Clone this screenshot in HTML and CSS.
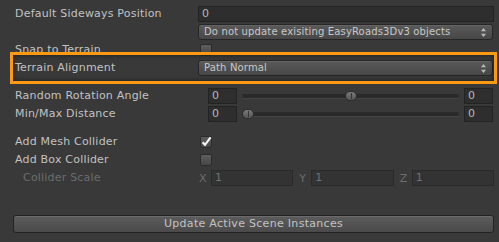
FILE: index.html
```html
<!DOCTYPE html>
<html lang="en">
<head>
    <meta charset="UTF-8">
    <meta name="viewport" content="width=device-width, initial-scale=1.0">
    <title>Road Settings Inspector</title>
    <link rel="stylesheet" href="styles.css">
</head>
<body>
    <div class="inspector">
        <div class="row">
            <span class="label">Default Sideways Position</span>
            <div class="field">0</div>
        </div>
        <div class="row">
            <span class="label"></span>
            <div class="popup">
                <span>Do not update exisiting EasyRoads3Dv3 objects</span>
                <svg class="arrows" viewBox="0 0 5 9" width="5" height="9">
                    <path d="M2.5 0L5 3.2H0z M2.5 9L5 5.8H0z" fill="#b8b8b8"/>
                </svg>
            </div>
        </div>
        <div class="row">
            <span class="label">Snap to Terrain</span>
            <span class="toggle"></span>
        </div>
        <div class="row">
            <span class="label">Terrain Alignment</span>
            <div class="popup">
                <span>Path Normal</span>
                <svg class="arrows" viewBox="0 0 5 9" width="5" height="9">
                    <path d="M2.5 0L5 3.2H0z M2.5 9L5 5.8H0z" fill="#b8b8b8"/>
                </svg>
            </div>
        </div>

        <div class="row section">
            <span class="label">Random Rotation Angle</span>
            <div class="minmax">
                <div class="field small">0</div>
                <div class="slider"><span class="thumb" style="left: 47.5%"></span></div>
                <div class="field small">0</div>
            </div>
        </div>
        <div class="row">
            <span class="label">Min/Max Distance</span>
            <div class="minmax">
                <div class="field small">0</div>
                <div class="slider"><span class="thumb" style="left: 0%"></span></div>
                <div class="field small">0</div>
            </div>
        </div>

        <div class="row section">
            <span class="label">Add Mesh Collider</span>
            <span class="toggle checked">
                <svg viewBox="0 0 12 12" width="12" height="12">
                    <path d="M2.6 6.2L5 8.8L10.6 1.4" fill="none" stroke="#f2f2f2" stroke-width="2.2"/>
                </svg>
            </span>
        </div>
        <div class="row">
            <span class="label">Add Box Collider</span>
            <span class="toggle"></span>
        </div>
        <div class="row">
            <span class="label disabled indent">Collider Scale</span>
            <div class="vector">
                <div class="axis"><span>X</span><div class="field disabled">1</div></div>
                <div class="axis"><span>Y</span><div class="field disabled">1</div></div>
                <div class="axis"><span>Z</span><div class="field disabled">1</div></div>
            </div>
        </div>

        <button class="action">Update Active Scene Instances</button>
    </div>

    <div class="highlight"></div>
</body>
</html>
```

FILE: styles.css
```css
:root {
    --ui-bg: #393939;
    --ui-text: #c2c2c2;
    --ui-text-disabled: #6c6c6c;
    --ui-field-bg: #2e2e2e;
    --ui-field-border: #232323;
    --ui-control-top: #5a5a5a;
    --ui-control-bottom: #474747;
    --ui-control-border: #262626;
    --ui-highlight: #fb9a12;
}

body {
    margin: 0;
    background-color: var(--ui-bg);
    color: var(--ui-text);
    font-family: "DejaVu Sans", "Liberation Sans", sans-serif;
    font-size: 11px;
    letter-spacing: 0.2px;
}

.inspector {
    padding: 5px 5px 0 14px;
}

.row {
    display: grid;
    grid-template-columns: 184px 1fr;
    align-items: center;
    height: 18px;
}

.row.section {
    margin-top: 10px;
}

.label {
    padding-left: 1px;
    line-height: 18px;
    white-space: nowrap;
}

.label.indent {
    padding-left: 9px;
}

.label.disabled {
    color: var(--ui-text-disabled);
}

.field {
    height: 16px;
    box-sizing: border-box;
    padding: 0 3px;
    line-height: 14px;
    background-color: var(--ui-field-bg);
    border: 1px solid var(--ui-field-border);
    color: #b8b8b8;
}

.field.small {
    width: 29px;
    flex: none;
}

.field.disabled {
    flex: 1;
    background-color: #333333;
    border-color: #2a2a2a;
    color: #717171;
}

.popup {
    display: flex;
    align-items: center;
    justify-content: space-between;
    height: 16px;
    box-sizing: border-box;
    margin-right: 1px;
    padding: 0 6px 0 5px;
    border: 1px solid var(--ui-control-border);
    border-radius: 3px;
    background: linear-gradient(var(--ui-control-top), var(--ui-control-bottom));
    box-shadow: inset 0 1px rgba(255, 255, 255, 0.07);
    color: #c8c8c8;
    font-size: 10px;
    letter-spacing: 0.15px;
    line-height: 14px;
}

.arrows {
    flex: none;
}

.toggle {
    width: 12px;
    height: 12px;
    box-sizing: border-box;
    margin-left: 2px;
    border: 1px solid #2b2b2b;
    border-radius: 2px;
    background: linear-gradient(#5e5e5e, #464646);
    position: relative;
}

.toggle svg {
    position: absolute;
    left: -1px;
    top: -1px;
}

.minmax {
    display: flex;
    align-items: center;
    gap: 5px;
    margin-left: 10px;
    margin-right: 1px;
}

.slider {
    flex: 1;
    height: 18px;
    position: relative;
}

.slider::before {
    content: "";
    position: absolute;
    left: 0;
    right: 0;
    top: 7px;
    height: 4px;
    border-radius: 2px;
    background-color: #2a2a2a;
    box-shadow: 0 1px rgba(255, 255, 255, 0.06);
}

.thumb {
    position: absolute;
    top: 4px;
    width: 12px;
    height: 10px;
    box-sizing: border-box;
    border: 1px solid #2c2c2c;
    border-radius: 5px;
    background: linear-gradient(#7a7a7a, #555555);
}

.thumb::after {
    content: "";
    position: absolute;
    left: 5px;
    top: 1px;
    width: 1px;
    height: 6px;
    background-color: #353535;
}

.vector {
    display: grid;
    grid-template-columns: 1fr 1fr 1fr;
    gap: 5px;
}

.axis {
    display: flex;
    align-items: center;
}

.axis span {
    width: 12px;
    flex: none;
    padding-left: 1px;
    color: var(--ui-text-disabled);
}

.action {
    display: block;
    width: calc(100% + 1px);
    height: 18px;
    margin: 28px 0 0 -1px;
    padding: 0;
    border: 1px solid #232323;
    border-radius: 3px;
    background: linear-gradient(#5c5c5c, #4a4a4a);
    box-shadow: inset 0 1px rgba(255, 255, 255, 0.1);
    color: #c2c2c2;
    font-family: inherit;
    font-size: 11px;
    letter-spacing: 0.3px;
    line-height: 16px;
}

.highlight {
    position: absolute;
    left: 10px;
    top: 52px;
    width: 487px;
    height: 32px;
    box-sizing: border-box;
    border: 3px solid var(--ui-highlight);
    box-shadow: inset 0 0 5px rgba(0, 0, 0, 0.55);
    pointer-events: none;
}
```
